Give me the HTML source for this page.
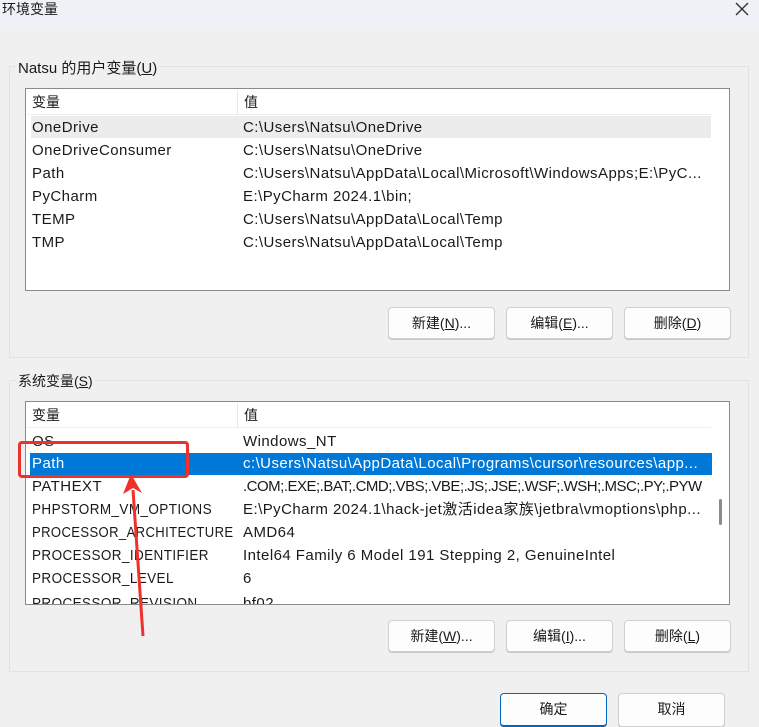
<!DOCTYPE html>
<html><head><meta charset="utf-8"><style>
*{margin:0;padding:0;box-sizing:border-box}
body{width:759px;height:716px;overflow:hidden;background:#f0f0f0;font-family:"Liberation Sans","Noto Sans CJK SC",sans-serif;font-size:14px;color:#1a1a1a;position:relative}
.abs{position:absolute}
.title{left:0;top:0;width:759px;height:27px;background:#eef2f7}
.grp{border:1px solid #e2e2e2;background:#f0f0f0}
.glabel{background:#f0f0f0;padding:0 2px;font-size:14px}
.list{background:#fff;border:1px solid #8a8a8a;overflow:hidden}
.row{position:absolute;left:6px;height:23px;line-height:23px;white-space:nowrap;font-size:15px;letter-spacing:0.45px}
.c2{position:absolute;left:211px}
.hdr{position:absolute;left:1px;top:1px;height:25px;line-height:25px;background:#fff;border-bottom:1px solid #f0f0f0}
.btn{position:absolute;height:32px;width:107px;background:#fdfdfd;border:1px solid #d0d0d0;border-radius:4px;text-align:center;line-height:30px;font-size:14px;box-shadow:0 1px 0 #c8c8c8}
u{text-decoration:underline}
.sq{display:inline-block;transform-origin:0 50%}
</style></head><body>
<div class="abs title"></div>
<div class="abs" style="left:2px;top:0;font-size:14px;line-height:18px">环境变量</div>
<svg class="abs" style="left:735px;top:2px" width="14" height="14"><path d="M1 1L13 13M13 1L1 13" stroke="#333" stroke-width="1.4"/></svg>

<div class="abs grp" style="left:9px;top:66px;width:740px;height:292px"></div>
<div class="abs glabel" style="left:16px;top:57px;font-size:15px">Natsu 的用户变量(<u>U</u>)</div>
<div class="abs list" style="left:25px;top:88px;width:705px;height:203px">
 <div class="hdr" style="width:684px"><span style="position:absolute;left:5px">变量</span><span style="position:absolute;left:210px;top:0;height:25px;border-left:1px solid #e8e8e8"></span><span style="position:absolute;left:217px">值</span></div>
 <div class="abs" style="left:5px;top:27px;width:680px;height:22px;background:#ececec"></div>
 <div class="row" style="top:27px">OneDrive<span class="c2">C:\Users\Natsu\OneDrive</span></div>
 <div class="row" style="top:50px">OneDriveConsumer<span class="c2">C:\Users\Natsu\OneDrive</span></div>
 <div class="row" style="top:73px">Path<span class="c2">C:\Users\Natsu\AppData\Local\Microsoft\WindowsApps;E:\PyC...</span></div>
 <div class="row" style="top:96px">PyCharm<span class="c2">E:\PyCharm 2024.1\bin;</span></div>
 <div class="row" style="top:119px">TEMP<span class="c2">C:\Users\Natsu\AppData\Local\Temp</span></div>
 <div class="row" style="top:142px">TMP<span class="c2">C:\Users\Natsu\AppData\Local\Temp</span></div>
</div>
<div class="btn" style="left:388px;top:307px">新建(<u>N</u>)...</div>
<div class="btn" style="left:506px;top:307px">编辑(<u>E</u>)...</div>
<div class="btn" style="left:624px;top:307px">删除(<u>D</u>)</div>

<div class="abs grp" style="left:9px;top:380px;width:740px;height:292px"></div>
<div class="abs glabel" style="left:16px;top:371px">系统变量(<u>S</u>)</div>
<div class="abs list" style="left:25px;top:401px;width:705px;height:204px">
 <div class="row" style="top:28px">OS<span class="c2">Windows_NT</span></div>
 <div class="hdr" style="width:684px"><span style="position:absolute;left:5px">变量</span><span style="position:absolute;left:210px;top:0;height:25px;border-left:1px solid #e8e8e8"></span><span style="position:absolute;left:217px">值</span></div>
 <div class="abs" style="left:4px;top:51px;width:682px;height:22px;background:#0078d7"></div>
 <div class="row" style="top:50px;color:#fff">Path<span class="c2">c:\Users\Natsu\AppData\Local\Programs\cursor\resources\app...</span></div>
 <div class="row" style="top:73px">PATHEXT<span class="c2" style="letter-spacing:-0.5px">.COM;.EXE;.BAT;.CMD;.VBS;.VBE;.JS;.JSE;.WSF;.WSH;.MSC;.PY;.PYW</span></div>
 <div class="row" style="top:96px"><span class="sq" style="transform:scaleX(0.9)">PHPSTORM_VM_OPTIONS</span><span class="c2">E:\PyCharm 2024.1\hack-jet激活idea家族\jetbra\vmoptions\php...</span></div>
 <div class="row" style="top:119px"><span class="sq" style="transform:scaleX(0.87)">PROCESSOR_ARCHITECTURE</span><span class="c2">AMD64</span></div>
 <div class="row" style="top:142px"><span class="sq" style="transform:scaleX(0.9)">PROCESSOR_IDENTIFIER</span><span class="c2">Intel64 Family 6 Model 191 Stepping 2, GenuineIntel</span></div>
 <div class="row" style="top:165px"><span class="sq" style="transform:scaleX(0.9)">PROCESSOR_LEVEL</span><span class="c2">6</span></div>
 <div class="row" style="top:190px"><span class="sq" style="transform:scaleX(0.9)">PROCESSOR_REVISION</span><span class="c2">bf02</span></div>
 <div class="abs" style="left:693px;top:97px;width:3px;height:26px;background:#8a8a8a;border-radius:2px"></div>
</div>
<div class="btn" style="left:388px;top:620px">新建(<u>W</u>)...</div>
<div class="btn" style="left:506px;top:620px">编辑(<u>I</u>)...</div>
<div class="btn" style="left:624px;top:620px">删除(<u>L</u>)</div>

<div class="btn" style="left:500px;top:693px;border-color:#0067c0;border-width:1px 1px 2px;height:34px">确定</div>
<div class="btn" style="left:618px;top:693px;height:34px">取消</div>

<div class="abs" style="left:18px;top:441px;width:171px;height:37px;border:3px solid #f0302a;border-radius:4px"></div>
<svg class="abs" style="left:0;top:0" width="759" height="716">
<path d="M143 636L133 490" stroke="#f0302a" stroke-width="3" fill="none"/>
<path d="M131 474L123 494L133 488L142 493Z" fill="#f0302a"/>
</svg>
</body></html>
